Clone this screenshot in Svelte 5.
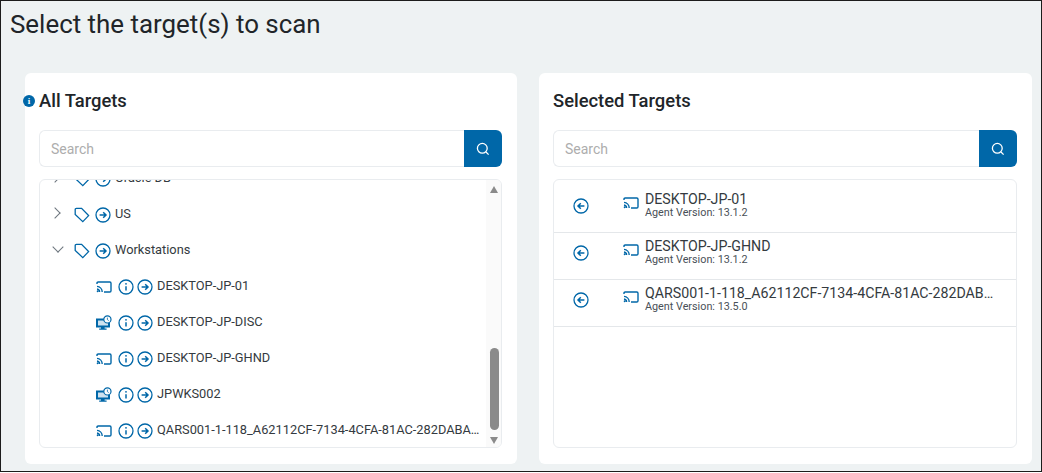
<script>
    const blue = "#0067a8";

    // tree rows, the first one is cut off by the scrolled list
    const groups = [
        { name: "Oracle DB", open: false },
        { name: "US", open: false },
        { name: "Workstations", open: true }
    ];
    const hosts = [
        { name: "DESKTOP-JP-01", kind: "cast" },
        { name: "DESKTOP-JP-DISC", kind: "desktop" },
        { name: "DESKTOP-JP-GHND", kind: "cast" },
        { name: "JPWKS002", kind: "desktop" },
        { name: "QARS001-1-118_A62112CF-7134-4CFA-81AC-282DABA4C1D09F", kind: "cast" }
    ];
    const selected = [
        { name: "DESKTOP-JP-01", version: "13.1.2" },
        { name: "DESKTOP-JP-GHND", version: "13.1.2" },
        { name: "QARS001-1-118_A62112CF-7134-4CFA-81AC-282DABA4C1D09F", version: "13.5.0" }
    ];
</script>

{#snippet go()}
    <svg class="ic" viewBox="0 0 16 16" width="16" height="16">
        <circle cx="8" cy="8" r="7" />
        <path d="M4.6 8h6.4M8.2 5.2 11 8l-2.8 2.8" class="thick" />
    </svg>
{/snippet}

{#snippet back()}
    <svg class="ic" viewBox="0 0 16 16" width="16" height="16">
        <circle cx="8" cy="8" r="7" />
        <path d="M11.4 8H5M7.8 5.2 5 8l2.8 2.8" class="thick" />
    </svg>
{/snippet}

{#snippet info()}
    <svg class="ic" viewBox="0 0 16 16" width="16" height="16">
        <circle cx="8" cy="8" r="7" />
        <path d="M8 7.2v4.4" class="thick" />
        <circle cx="8" cy="4.8" r="0.9" class="dot" />
    </svg>
{/snippet}

{#snippet tag()}
    <svg class="ic" viewBox="0 0 16 16" width="16" height="16">
        <path d="M1.2 2.6q0-1.2 1.2-1.2h5.2l7 7.2-5.8 6-7.6-7.2z" />
    </svg>
{/snippet}

{#snippet cast()}
    <svg class="ic cast" viewBox="0 0 16 12" width="16" height="12">
        <path d="M1 3V2.2Q1 1 2.2 1h11.6Q15 1 15 2.2v7.6q0 1.2-1.2 1.2H8" />
        <path d="M1 5.4A5.6 5.6 0 0 1 6.2 11M1 8A3 3 0 0 1 3.6 11" />
        <circle cx="1.7" cy="10.3" r="1" class="dot" />
    </svg>
{/snippet}

{#snippet desktop()}
    <svg class="ic" viewBox="0 0 16 16" width="16" height="16">
        <path d="M1 4.6h12v6.8H1z" class="screen" />
        <path d="M5 12h3.6v1.6h2v1.2H3.2v-1.2H5z" class="dot" />
        <circle cx="11.4" cy="4.4" r="3.6" class="clock" />
        <path d="M11.4 2.6v2l1.3 1" class="hair" />
    </svg>
{/snippet}

{#snippet search(placeholder)}
    <div class="search">
        <input type="text" {placeholder} />
        <button aria-label="Search">
            <svg viewBox="0 0 14 14" width="14" height="14">
                <circle cx="6.3" cy="6.3" r="4.9" />
                <path d="M10 10l2.6 2.6" />
            </svg>
        </button>
    </div>
{/snippet}

<main style="--blue: {blue}">
    <h1>Select the target(s) to scan</h1>

    <div class="columns">
        <section class="card">
            <h2>
                <span class="badge">i</span>
                All Targets
            </h2>
            {@render search("Search")}
            <div class="box tree">
                <ul>
                    {#each groups as group}
                        <li class="row">
                            <span class="chevron" class:open={group.open}></span>
                            {@render tag()}
                            {@render go()}
                            <span class="name">{group.name}</span>
                        </li>
                    {/each}
                    {#each hosts as host}
                        <li class="row host">
                            <span class="kind">
                                {#if host.kind === "cast"}
                                    {@render cast()}
                                {:else}
                                    {@render desktop()}
                                {/if}
                            </span>
                            {@render info()}
                            {@render go()}
                            <span class="name">{host.name}</span>
                        </li>
                    {/each}
                </ul>
                <div class="scrollbar">
                    <span class="arrow up"></span>
                    <span class="thumb"></span>
                    <span class="arrow down"></span>
                </div>
            </div>
        </section>

        <section class="card">
            <h2>Selected Targets</h2>
            {@render search("Search")}
            <div class="box picked">
                {#each selected as item}
                    <div class="item">
                        <span class="remove">{@render back()}</span>
                        <span class="kind">{@render cast()}</span>
                        <div class="text">
                            <div class="title">{item.name}</div>
                            <div class="version">Agent Version: {item.version}</div>
                        </div>
                    </div>
                {/each}
            </div>
        </section>
    </div>
</main>

<style>
    :global(body) {
        margin: 0;
    }

    main {
        box-sizing: border-box;
        width: 1042px;
        height: 472px;
        padding: 0 9px 7px 9px;
        background: #eef2f3;
        border: 1px solid #1c1c1c;
        font-family: Roboto, "Liberation Sans", sans-serif;
        color: #212529;
        display: flex;
        flex-direction: column;
        overflow: hidden;
    }

    h1 {
        margin: 8px 0 0;
        height: 64px;
        font-size: 25.9px;
        line-height: 30px;
        font-weight: 400;
    }

    .columns {
        flex: 1;
        min-height: 0;
        display: grid;
        grid-template-columns: 492px 1fr;
        gap: 22px;
        padding-left: 15px;
    }

    .card {
        position: relative;
        box-sizing: border-box;
        min-width: 0;
        background: #fff;
        border-radius: 6px;
        padding: 16px 15px 0 14px;
        display: flex;
        flex-direction: column;
    }

    h2 {
        margin: 0;
        height: 41px;
        font-size: 18.4px;
        line-height: 24px;
        font-weight: 500;
    }

    .badge {
        position: absolute;
        left: -2px;
        top: 22px;
        width: 12px;
        height: 12px;
        border-radius: 50%;
        background: var(--blue);
        color: #fff;
        font: 700 9px/12px "Liberation Serif", serif;
        text-align: center;
    }

    .search {
        display: flex;
        height: 37px;
        margin-bottom: 12px;
    }

    input {
        flex: 1;
        min-width: 0;
        box-sizing: border-box;
        padding: 0 11px;
        border: 1px solid #e9ecef;
        border-right: 0;
        border-radius: 6px 0 0 6px;
        outline: none;
        font: 400 14px Roboto, sans-serif;
    }

    input::placeholder {
        color: #adadad;
        opacity: 1;
    }

    button {
        width: 38px;
        border: 0;
        padding: 0;
        background: var(--blue);
        border-radius: 0 6px 6px 0;
        display: flex;
        align-items: center;
        justify-content: center;
    }

    button svg {
        fill: none;
        stroke: #fff;
        stroke-width: 1.3;
    }

    .box {
        position: relative;
        box-sizing: border-box;
        height: 269px;
        border: 1px solid #e9ecef;
        border-radius: 6px;
        overflow: hidden;
    }

    ul {
        list-style: none;
        margin: -19px 0 0;
        padding: 0;
    }

    .row {
        height: 36px;
        display: flex;
        align-items: center;
        padding-left: 34px;
        gap: 5px;
        position: relative;
        font-size: 12.8px;
    }

    .row .name {
        margin-left: -1px;
        margin-bottom: 3px;
        width: 326px;
        white-space: nowrap;
        overflow: hidden;
        text-overflow: ellipsis;
        color: #343a40;
    }

    .row.host {
        padding-left: 56px;
        gap: 3px;
    }

    .row.host .name {
        margin-left: 1px;
    }

    .row.host .kind {
        margin-right: 3px;
    }

    .kind {
        display: inline-flex;
    }

    .ic {
        flex: none;
        fill: none;
        stroke: var(--blue);
        stroke-width: 1.3;
        overflow: visible;
    }

    .ic.cast {
        stroke-width: 1.4;
    }

    .ic .thick {
        stroke-width: 1.5;
    }

    .ic .dot {
        fill: var(--blue);
        stroke: none;
    }

    .ic .screen {
        fill: #cfe2ef;
        stroke-width: 2;
    }

    .ic .clock {
        fill: #fff;
        stroke-width: 1.2;
    }

    .ic .hair {
        stroke-width: 0.8;
    }

    .chevron {
        position: absolute;
        left: 11px;
        top: 12px;
        width: 7px;
        height: 7px;
        border-top: 1.3px solid #6c757d;
        border-right: 1.3px solid #6c757d;
        transform: rotate(45deg);
    }

    .chevron.open {
        left: 14px;
        top: 10px;
        transform: rotate(135deg);
    }

    .scrollbar {
        position: absolute;
        top: 0;
        right: 0;
        bottom: 0;
        width: 15px;
        background: #fafafa;
    }

    .arrow {
        position: absolute;
        left: 4px;
        border-left: 4.5px solid transparent;
        border-right: 4.5px solid transparent;
    }

    .arrow.up {
        top: 6px;
        border-bottom: 7px solid #8a8a8a;
    }

    .arrow.down {
        bottom: 3px;
        border-top: 7px solid #8a8a8a;
    }

    .thumb {
        position: absolute;
        left: 4px;
        right: 2px;
        bottom: 17px;
        height: 82px;
        border-radius: 5px;
        background: #8a8a8a;
    }

    .picked {
        padding-top: 6px;
    }

    .item {
        height: 47px;
        box-sizing: border-box;
        padding-bottom: 7px;
        border-bottom: 1px solid #e4e7ea;
        display: flex;
        align-items: center;
    }

    .remove {
        display: inline-flex;
        margin-left: 19px;
        margin-right: 34px;
    }

    .item .kind {
        margin-right: 6px;
        margin-bottom: 6px;
    }

    .text {
        min-width: 0;
        width: 356px;
    }

    .title {
        font-size: 14.2px;
        line-height: 15px;
        color: #343a40;
        white-space: nowrap;
        overflow: hidden;
        text-overflow: ellipsis;
    }

    .version {
        font-size: 10.8px;
        line-height: 12px;
        color: #495057;
    }
</style>
